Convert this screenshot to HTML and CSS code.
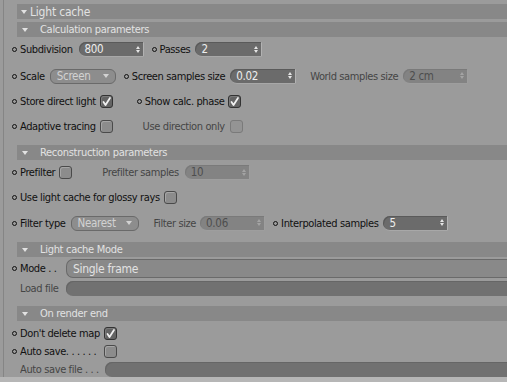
FILE: index.html
```html
<!DOCTYPE html>
<html>
<head>
    <title>Light cache</title>
    <link rel="stylesheet" href="styles.css">
</head>
<body>
    <div class="panel">
        <div class="group-title main"><span class="tri"></span>Light cache</div>

        <div class="group-title sub"><span class="tri"></span>Calculation parameters</div>
        <div class="row r-subdiv">
            <span class="dot"></span><span class="label">Subdivision</span>
            <span class="spin w65 m6">800<span class="arrows"><i class="up"></i><i class="down"></i></span></span>
            <span class="dot m8"></span><span class="label">Passes</span>
            <span class="spin w67 m5">2<span class="arrows"><i class="up"></i><i class="down"></i></span></span>
        </div>
        <div class="row r-scale">
            <span class="dot"></span><span class="label">Scale</span>
            <span class="drop w66 m5">Screen<i class="caret"></i></span>
            <span class="dot m8"></span><span class="label">Screen samples size</span>
            <span class="spin w66 m5">0.02<span class="arrows"><i class="up"></i><i class="down"></i></span></span>
            <span class="label off m14">World samples size</span>
            <span class="spin off w65 m5">2 cm<span class="arrows"><i class="up"></i><i class="down"></i></span></span>
        </div>
        <div class="row r-store">
            <span class="dot"></span><span class="label">Store direct light</span>
            <span class="check on m4"></span>
            <span class="dot m24"></span><span class="label">Show calc. phase</span>
            <span class="check on m4"></span>
        </div>
        <div class="row r-adapt">
            <span class="dot"></span><span class="label">Adaptive tracing</span>
            <span class="check m4"></span>
            <span class="label off m30">Use direction only</span>
            <span class="check off m5"></span>
        </div>

        <div class="group-title sub g-recon"><span class="tri"></span>Reconstruction parameters</div>
        <div class="row r-std">
            <span class="dot"></span><span class="label">Prefilter</span>
            <span class="check m4"></span>
            <span class="label off m30">Prefilter samples</span>
            <span class="spin off w65 m6">10<span class="arrows"><i class="up"></i><i class="down"></i></span></span>
        </div>
        <div class="row r-std">
            <span class="dot"></span><span class="label">Use light cache for glossy rays</span>
            <span class="check m4"></span>
        </div>
        <div class="row r-filter">
            <span class="dot"></span><span class="label">Filter type</span>
            <span class="drop w68 m5">Nearest<i class="caret"></i></span>
            <span class="label off m15">Filter size</span>
            <span class="spin off w65 m4">0.06<span class="arrows"><i class="up"></i><i class="down"></i></span></span>
            <span class="dot m8"></span><span class="label">Interpolated samples</span>
            <span class="spin w65 m5">5<span class="arrows"><i class="up"></i><i class="down"></i></span></span>
        </div>

        <div class="group-title sub g-mode"><span class="tri"></span>Light cache Mode</div>
        <div class="row r-mode">
            <span class="dot"></span><span class="label short">Mode . .</span>
            <span class="drop wide">Single frame</span>
        </div>
        <div class="row r-load">
            <span class="label off short nodot">Load file</span>
            <span class="field wide"></span>
        </div>

        <div class="group-title sub g-end"><span class="tri"></span>On render end</div>
        <div class="row r-tight">
            <span class="dot"></span><span class="label long">Don't delete map</span>
            <span class="check on"></span>
        </div>
        <div class="row r-tight">
            <span class="dot"></span><span class="label long">Auto save. . . . . .</span>
            <span class="check"></span>
        </div>
        <div class="row r-file">
            <span class="label off long nodot">Auto save file . . .</span>
            <span class="field wide"></span>
        </div>
    </div>
    <div class="footer"></div>
</body>
</html>
```

FILE: styles.css
```css
html, body {
    margin: 0;
    height: 382px;
    overflow: hidden;
    background-color: #9b9b9b;
    font-family: "DejaVu Sans Condensed", "Liberation Sans", Arial, sans-serif;
    font-stretch: condensed;
    font-size: 11px;
    color: #111;
}

.panel {
    margin-left: 3px;
    height: 377px;
    padding-top: 4px;
    box-sizing: border-box;
    border-left: 1px solid #858585;
    overflow: hidden;
}

.footer {
    height: 5px;
    background-color: #b6b6b6;
}

/* section bars */
.group-title {
    height: 15px;
    margin-left: 13px;
    display: flex;
    align-items: center;
    background-color: #888;
    color: #e2e2e2;
    letter-spacing: -0.3px;
    white-space: nowrap;
}

.group-title.main {
    padding-left: 4px;
    font-size: 12px;
    letter-spacing: -0.2px;
}

.group-title.main .tri {
    margin-right: 3px;
}

.group-title.sub {
    margin-top: 3px;
    padding-left: 5px;
}

.group-title.sub .tri {
    margin-right: 12px;
}

.g-recon { margin-top: 6px !important; }
.g-mode { margin-top: 6px !important; }
.g-end { margin-top: 9px !important; }

.tri {
    width: 0;
    height: 0;
    border-left: 3.5px solid transparent;
    border-right: 3.5px solid transparent;
    border-top: 4px solid #e2e2e2;
}

/* rows */
.row {
    display: flex;
    align-items: center;
    padding-left: 8px;
    white-space: nowrap;
}

.r-subdiv { height: 25px; }
.r-scale { height: 28px; }
.r-store { height: 23px; }
.r-adapt { height: 26px; }
.r-std { height: 25px; }
.r-filter { height: 26px; }
.r-mode { height: 23px; }
.r-load { height: 17px; }
.r-tight { height: 18px; }
.r-file { height: 19px; }

.group-title.g-end + .row { margin-top: 3px; }

.dot {
    width: 3px;
    height: 3px;
    border: 1px solid #111;
    border-radius: 50%;
    margin-right: 3px;
    flex: none;
}

.label {
    letter-spacing: -0.38px;
}

.label.off {
    color: #454545;
}

.label.nodot {
    margin-left: 8px;
}

.label.short {
    width: 46px;
}

.label.long {
    width: 84px;
    overflow: hidden;
}

.m4 { margin-left: 4px; }
.m5 { margin-left: 5px; }
.m6 { margin-left: 6px; }
.m8 { margin-left: 8px; }
.m9 { margin-left: 9px; }
.m14 { margin-left: 14px; }
.m15 { margin-left: 15px; }
.m24 { margin-left: 24px; }
.m30 { margin-left: 30px; }

.w65 { width: 65px; }
.w66 { width: 66px; }
.w67 { width: 67px; }
.w68 { width: 68px; }

/* number fields */
.spin {
    height: 15px;
    box-sizing: border-box;
    display: flex;
    align-items: center;
    justify-content: space-between;
    padding-left: 6px;
    padding-right: 3px;
    background-color: #6b6b6b;
    color: #eee;
    border-radius: 7px 1px 1px 7px;
    border-right: 1px solid #b2b2b2;
    border-bottom: 1px solid #a8a8a8;
    box-shadow: inset 1px 1px 0 #5a5a5a;
    font-size: 11.5px;
    letter-spacing: -0.3px;
    flex: none;
}

.spin.off {
    background-color: #838383;
    color: #4e4e4e;
    border-right-color: #9e9e9e;
    border-bottom-color: #9e9e9e;
    box-shadow: inset 1px 1px 0 #7a7a7a;
}

.arrows {
    display: flex;
    flex-direction: column;
    gap: 1px;
}

.arrows i {
    display: block;
    width: 0;
    height: 0;
    border-left: 2.5px solid transparent;
    border-right: 2.5px solid transparent;
}

.arrows .up { border-bottom: 3px solid #e6e6e6; }
.arrows .down { border-top: 3px solid #e6e6e6; }

.spin.off .arrows .up { border-bottom-color: #a4a4a4; }
.spin.off .arrows .down { border-top-color: #a4a4a4; }

/* dropdowns */
.drop {
    height: 15px;
    box-sizing: border-box;
    display: flex;
    align-items: center;
    justify-content: space-between;
    padding: 0 6px 0 6px;
    background-color: #8d8d8d;
    border: 1px solid #6a6a6a;
    border-radius: 6px;
    color: #d2d2d2;
    font-size: 11.5px;
    letter-spacing: -0.3px;
    flex: none;
}

.caret {
    width: 0;
    height: 0;
    border-left: 3.5px solid transparent;
    border-right: 3.5px solid transparent;
    border-top: 4px solid #d2d2d2;
}

.drop.wide {
    flex: 1;
    height: 19px;
    border-right: none;
    border-radius: 7px 0 0 7px;
    background-color: #898989;
    color: #e2e2e2;
    font-size: 12px;
}

.field.wide {
    flex: 1;
    height: 15px;
    background-color: #717171;
    border-radius: 7px 0 0 7px;
    box-shadow: inset 1px 1px 0 #666;
}

.r-file .field.wide {
    margin-left: 1px;
}

/* checkboxes */
.check {
    width: 11px;
    height: 11px;
    border: 1px solid #4a4a4a;
    border-radius: 3px;
    background-color: #8c8c8c;
    box-shadow: inset 1px 1px 0 #a6a6a6;
    flex: none;
}

.check.on {
    border-color: #333;
    background-color: #646464;
    box-shadow: inset 1px 1px 0 #7a7a7a;
    background-image: url("data:image/svg+xml;utf8,<svg xmlns='http://www.w3.org/2000/svg' width='11' height='11'><path d='M2.5 6 L4.5 9 L9 2' fill='none' stroke='%23f0f0f0' stroke-width='1.8' stroke-linecap='round' stroke-linejoin='round'/></svg>");
    background-repeat: no-repeat;
}

.check.off {
    border-color: #7a7a7a;
    background-color: #949494;
    box-shadow: none;
}
```
